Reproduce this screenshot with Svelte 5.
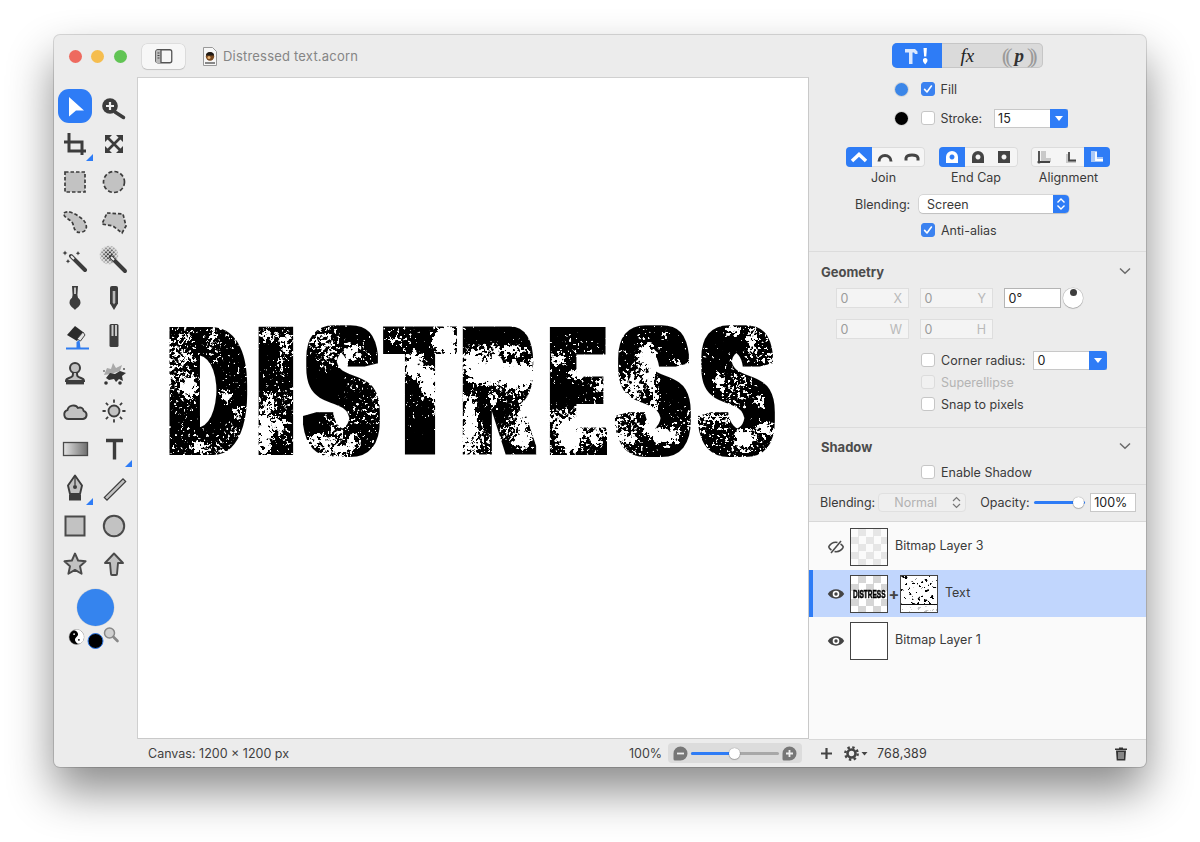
<script>
  const sm = 174; // font size of the big word
  const ink = { D:[.073,.68], I:[.07,.21], S:[.04,.62], T:[.02,.59], R:[.07,.71], E:[.07,.63] };
  const pad = 8;
  const word = [
    ['D',170,247],['I',259,293],['S',304,379],['T',384,456],
    ['R',463,537],['E',550,607],['S',616,690],['S',699,774]
  ].map(([ch,a,b]) => {
    const [l,r] = ink[ch];
    const sx = ((b-a)-2*pad)/((r-l)*sm);
    const x = a+pad - l*sm*sx;
    return { ch, t:`translate(${x.toFixed(1)} 451) scale(${sx.toFixed(3)} 1)` };
  });
  const blobs = [
    [189,386,7,12],[187,358,8,3],[226,396,5,7],[238,412,4,5],[200,447,11,4],[213,339,3,8],[186,336,4,2],
    [268,336,8,4],[286,345,4,12],[281,365,2,9],[265,432,7,24],[279,426,7,8],[287,441,3,3],[270,402,3,10],
    [351,352,8,8],[318,441,12,5],[340,449,11,4],[352,442,5,7],
    [414,365,9,13],[428,380,9,15],[445,340,13,15],[395,339,6,3],[404,372,2,10],[437,404,2,16],[430,394,7,5],
    [473,362,9,10],[487,373,21,12],[515,376,20,14],[470,420,7,28],[507,350,18,4],[523,422,5,18],[522,440,11,8],[493,400,4,8],
    [559,360,8,5],[575,375,6,5],[570,436,13,17],[595,438,6,8],[600,385,4,8],
    [647,355,9,12],[651,378,6,12],[655,400,3,14],[665,436,15,8],[650,428,8,7],[620,436,5,5],[676,362,4,3],[630,440,6,5],[665,334,2,5],
    [733,330,8,4],[752,340,4,14],[720,382,5,8],[744,439,10,11],[765,429,8,7],[716,418,15,2],[760,402,4,7]
  ];
  const layers = [
    { name:'Bitmap Layer 3', kind:'ghost', hidden:true },
    { name:'Text', kind:'text', selected:true },
    { name:'Bitmap Layer 1', kind:'blank' }
  ];
</script>

{#snippet check(on, off)}
  <span class="box" class:on class:off>
    {#if on}<svg width="14" height="14" viewBox="0 0 14 14"><path d="M3.6 7.4 6 10l4.4-6" fill="none" stroke="#fff" stroke-width="1.6" stroke-linecap="round" stroke-linejoin="round"/></svg>{/if}
  </span>
{/snippet}

{#snippet arrowDown()}
  <span class="drop"><svg width="10" height="7" viewBox="0 0 10 7"><path d="M1 1h8L5 6z" fill="#fff"/></svg></span>
{/snippet}

{#snippet chevron()}
  <svg class="chev" width="12" height="8" viewBox="0 0 12 8"><path d="M1 1.5 6 6.2l5-4.7" fill="none" stroke="#6a6a6a" stroke-width="1.5"/></svg>
{/snippet}

<div class="page">
  <div class="window">
    <div class="left">
      <header class="titlebar">
        <span class="light red"></span><span class="light yellow"></span><span class="light green"></span>
        <button class="sidebtn" aria-label="Toggle sidebar">
          <svg width="18" height="15" viewBox="0 0 18 15"><rect x=".75" y=".75" width="16" height="13" rx="2" fill="none" stroke="#555" stroke-width="1.3"/><path d="M1 2.5a1.5 1.5 0 0 1 1.5-1.5H6v13H2.500A1.500 1.500 0 0 1 1 12.500z" fill="#bbb"/><path d="M6 1v13" stroke="#555" stroke-width="1.300"/><path d="M2.500 4h2M2.500 6.500h2M2.500 9h2" stroke="#444" stroke-width="1"/></svg>
        </button>
        <svg class="doc" width="14" height="19" viewBox="0 0 14 19"><path d="M.5.5h9l4 4v14H.5z" fill="#f7f7f7" stroke="#999"/><circle cx="7" cy="9.500" r="4.200" fill="#7a4a20"/><path d="M3 8.500a4 3.500 0 0 1 8 0z" fill="#1f1a16"/><circle cx="6" cy="10.500" r="1.500" fill="#e5b070"/><rect x="2" y="15" width="10" height="2" fill="#888"/></svg>
        <span class="title">Distressed text.acorn</span>
      </header>

      <div class="work">
        <aside class="toolbar">
          <div class="tools">
            <div class="tool sel"><svg viewBox="0 0 28 28"><path d="M8 5 23 18.500 15 18.500 8 24.500z" fill="#fff"/></svg></div>
            <div class="tool"><svg viewBox="0 0 28 28"><path d="M15 20l8.500 5.500" stroke="#3c3c3c" stroke-width="3.500" stroke-linecap="round"/><circle cx="10" cy="14" r="7.800" fill="#3c3c3c"/><path d="M10 10v8M6 14h8" stroke="#eee" stroke-width="2.200"/></svg></div>

            <div class="tool corner"><svg viewBox="0 0 28 28"><path d="M8 3v18h17M3 12h18v13" fill="none" stroke="#3c3c3c" stroke-width="3"/></svg></div>
            <div class="tool"><svg viewBox="0 0 28 28"><path d="M8 8l12 12M20 8 8 20" stroke="#3c3c3c" stroke-width="2.600"/><path d="M5 5h7l-7 7zM23 5h-7l7 7zM5 23h7l-7-7zM23 23h-7l7-7z" fill="#3c3c3c"/></svg></div>

            <div class="tool"><svg viewBox="0 0 28 28"><rect x="4" y="4" width="20" height="20" fill="#c2c2c2" stroke="#3c3c3c" stroke-width="1.700" stroke-dasharray="3.500 2"/></svg></div>
            <div class="tool"><svg viewBox="0 0 28 28"><circle cx="14" cy="14" r="10.500" fill="#c2c2c2" stroke="#3c3c3c" stroke-width="1.700" stroke-dasharray="4 2.200"/></svg></div>

            <div class="tool"><svg viewBox="0 0 28 28"><path d="M3 6C6 3 14 6 20 11c7 5 7 13 1 14-6 2-8-3-9-8C10 12 2 11 3 6z" fill="#c2c2c2" stroke="#3c3c3c" stroke-width="1.700" stroke-dasharray="3.500 2"/></svg></div>
            <div class="tool"><svg viewBox="0 0 28 28"><path d="M7 6l16 1 3 12-4 7-9-7-11-2z" fill="#c2c2c2" stroke="#3c3c3c" stroke-width="1.700" stroke-dasharray="3.500 2"/></svg></div>

            <div class="tool"><svg viewBox="0 0 28 28"><path d="M10 11 24 25" stroke="#3c3c3c" stroke-width="4" stroke-linecap="round"/><path d="M10 11l3 3" stroke="#eee" stroke-width="2"/><path d="M4 5.500l.8 1.700 1.700.8-1.700.8L4 10.500l-.8-1.700L1.500 8l1.700-.8zM17 6l.7 1.500 1.500.7-1.500.7-.7 1.500-.7-1.500-1.500-.7 1.500-.7zM7 14l.7 1.500 1.500.7-1.500.7-.7 1.500-.7-1.500-1.500-.7 1.500-.7z" fill="#3c3c3c"/></svg></div>
            <div class="tool"><svg viewBox="0 0 28 28"><defs><radialGradient id="halo" cx="9" cy="10" r="10" gradientUnits="userSpaceOnUse"><stop offset=".3" stop-color="#3c3c3c"/><stop offset="1" stop-color="#cfcfcf"/></radialGradient><pattern id="dots" width="2.800" height="2.800" patternUnits="userSpaceOnUse" patternTransform="rotate(45)"><rect width="2" height="2" fill="#fff"/></pattern><mask id="halomask" maskUnits="userSpaceOnUse" x="-2" y="-2" width="24" height="24"><rect x="-2" y="-2" width="24" height="24" fill="url(#dots)"/></mask></defs><circle cx="9" cy="10" r="9.500" fill="url(#halo)" mask="url(#halomask)"/><path d="M11 12 25 26" stroke="#3c3c3c" stroke-width="4" stroke-linecap="round"/><path d="M11 12l3 3" stroke="#eee" stroke-width="2"/></svg></div>

            <div class="tool"><svg viewBox="0 0 28 28"><path d="M11 3h6l-.6 9 .6 3h-6l.6-3z" fill="#3c3c3c"/><path d="M13 4.500h2v6.500h-2z" fill="#c4c4c4"/><path d="M14 27c-2-2.500-5.500-4-5.500-7.500a5.500 5.500 0 0 1 11 0c0 3.500-3.500 5-5.500 7.500z" fill="#3c3c3c"/></svg></div>
            <div class="tool"><svg viewBox="0 0 28 28"><path d="M10 5a2 2 0 0 1 2-2h4a2 2 0 0 1 2 2v15.500l-4 6.500-4-6.500z" fill="#3c3c3c"/><path d="M12.700 8h2.600v11.500l-1.300 2-1.300-2z" fill="#b8b8b8"/></svg></div>

            <div class="tool"><svg viewBox="0 0 28 28"><path d="M6 14l8-9 8 6-6 9z" fill="#2a2a2a"/><path d="M22 11l2 3-4.500 6-3.500-2z" fill="#e2e2e2" stroke="#333" stroke-width=".9"/><path d="M5 27.500h23" stroke="#2f7cf0" stroke-width="2"/><path d="M15.500 27V21l3-2 1 8z" fill="#2f7cf0"/></svg></div>
            <div class="tool"><svg viewBox="0 0 28 28"><rect x="9.500" y="3" width="9" height="23" rx="1.500" fill="#3c3c3c"/><rect x="11.500" y="4" width="2" height="11" fill="#c8c8c8"/><rect x="15" y="4" width="2" height="11" fill="#c8c8c8"/></svg></div>

            <div class="tool"><svg viewBox="0 0 28 28"><circle cx="14" cy="9" r="5" fill="#c2c2c2" stroke="#3c3c3c" stroke-width="2"/><path d="M12 14c0 4-1 4-4 5-1.500.5-3 1-3 3h18c0-2-1.500-2.500-3-3-3-1-4-1-4-5" fill="#c2c2c2" stroke="#3c3c3c" stroke-width="2"/><path d="M5 24h18" stroke="#3c3c3c" stroke-width="2.800"/></svg></div>
            <div class="tool"><svg viewBox="0 0 28 28"><path d="M4 16l3-7 4 1 2-6 3 5 6-3-2 6-9 3z" fill="#a9a9a9"/><path d="M6 19l4-5 5 1 5-3 6 2-4 3 1 5-4-2-3 3-2-3-5 1z" fill="#333"/><circle cx="6" cy="24" r="1.800" fill="#333"/><circle cx="20" cy="24" r="1.800" fill="#333"/><circle cx="24" cy="10" r="1" fill="#555"/><circle cx="4" cy="12" r="1" fill="#777"/></svg></div>

            <div class="tool"><svg viewBox="0 0 28 28"><path d="M7.500 22a4.500 4.500 0 0 1-1-8.800C7 8.500 14.500 6.500 17 11c3-1.500 5.500.5 5.500 2.800a4.200 4.200 0 0 1-.5 8.200z" fill="#c2c2c2" stroke="#3c3c3c" stroke-width="1.900" stroke-linejoin="round"/></svg></div>
            <div class="tool"><svg viewBox="0 0 28 28"><circle cx="14" cy="14" r="5.500" fill="#c2c2c2" stroke="#3c3c3c" stroke-width="1.800"/><path d="M14 2.500v3.200M14 22.300v3.200M2.500 14h3.200M22.300 14h3.200M5.900 5.900l2.200 2.200M19.900 19.900l2.200 2.200M5.900 22.100l2.200-2.200M19.900 8.100l2.200-2.200" stroke="#3c3c3c" stroke-width="1.800"/></svg></div>

            <div class="tool"><svg viewBox="0 0 28 28"><defs><linearGradient id="gr"><stop offset="0" stop-color="#e4e4e4"/><stop offset="1" stop-color="#6e6e6e"/></linearGradient></defs><rect x="2.500" y="7.500" width="24" height="13" fill="url(#gr)" stroke="#4a4a4a" stroke-width="1.300"/></svg></div>
            <div class="tool corner"><svg viewBox="0 0 28 28"><path d="M6 5.500h17M14.500 5.500V24.500" fill="none" stroke="#3c3c3c" stroke-width="3.400"/></svg></div>

            <div class="tool corner"><svg viewBox="0 0 28 28"><path d="M14 1.500 21 11.500 19 20H9L7 11.500z" fill="#c2c2c2" stroke="#3c3c3c" stroke-width="1.900" stroke-linejoin="round"/><path d="M14 3v8" stroke="#3c3c3c" stroke-width="1.300"/><circle cx="14" cy="13" r="2" fill="#3c3c3c"/><rect x="8" y="20.500" width="12" height="6" fill="#3c3c3c"/></svg></div>
            <div class="tool"><svg viewBox="0 0 28 28"><path d="M7 23.500 23 7.500" stroke="#3c3c3c" stroke-width="5" stroke-linecap="square"/><path d="M7 23.500 23 7.500" stroke="#c2c2c2" stroke-width="2.600" stroke-linecap="square"/></svg></div>

            <div class="tool"><svg viewBox="0 0 28 28"><rect x="4.500" y="4.500" width="19" height="19" fill="#c2c2c2" stroke="#4a4a4a" stroke-width="2"/></svg></div>
            <div class="tool"><svg viewBox="0 0 28 28"><circle cx="14" cy="14" r="10.200" fill="#c2c2c2" stroke="#4a4a4a" stroke-width="2"/></svg></div>

            <div class="tool"><svg viewBox="0 0 28 28"><path d="M14 3.500l3.100 7 7.500.8-5.600 5 1.600 7.400-6.600-3.800-6.600 3.800 1.600-7.400-5.600-5 7.500-.8z" fill="#c2c2c2" stroke="#4a4a4a" stroke-width="1.900" stroke-linejoin="round"/></svg></div>
            <div class="tool"><svg viewBox="0 0 28 28"><path d="M14 3.500 23 13h-5l-1 11a1 1 0 0 1-1 1h-4a1 1 0 0 1-1-1l-1-11H5z" fill="#c2c2c2" stroke="#4a4a4a" stroke-width="1.900" stroke-linejoin="round"/></svg></div>
          </div>

          <div class="fillwell"></div>
          <svg class="wells" width="64" height="24" viewBox="0 0 64 24" role="img" aria-label="Colour wells">
            <circle cx="14.500" cy="8" r="7.500" fill="#000" stroke="#999" stroke-width=".5"/>
            <g transform="rotate(-40 14.500 8)">
              <path d="M14.500.5a7.500 7.500 0 0 1 0 15 3.750 3.750 0 0 1 0-7.500 3.750 3.750 0 0 0 0-7.500z" fill="#fff"/>
              <circle cx="14.500" cy="4.250" r=".9" fill="#fff"/>
              <circle cx="14.500" cy="11.750" r=".9" fill="#000"/>
            </g>
            <circle cx="33.500" cy="12" r="7.500" fill="#000" stroke="#2f7cf0" stroke-width="1"/>
            <circle cx="47.500" cy="4" r="5" fill="#d0d0d0" stroke="#888" stroke-width="1.500"/>
            <path d="M51.500 8l4 4" stroke="#888" stroke-width="2.600" stroke-linecap="round"/>
          </svg>
        </aside>

        <main class="canvas">
          <svg class="art" width="670" height="662" viewBox="138 77 670 662" role="img" aria-label="Distressed word">
            <defs>
              <filter id="distress" filterUnits="userSpaceOnUse" x="160" y="315" width="630" height="155" color-interpolation-filters="sRGB">
                <feMorphology in="SourceGraphic" operator="dilate" radius="8 4" result="fat"/>
                <feTurbulence type="fractalNoise" baseFrequency="0.02" numOctaves="2" seed="11" result="lo"/>
                <feTurbulence type="fractalNoise" baseFrequency="0.32" numOctaves="3" seed="4" result="hi"/>
                <feComposite in="lo" in2="hi" operator="arithmetic" k1="0" k2="0.45" k3="0.55" k4="0" result="mix"/>
                <feColorMatrix in="mix" type="matrix" values="0 0 0 0 0  0 0 0 0 0  0 0 0 0 0  24 0 0 0 -14.100" result="holes"/>
                <feComposite in="fat" in2="holes" operator="out"/>
              </filter>
              <filter id="rough" filterUnits="userSpaceOnUse" x="160" y="315" width="630" height="155">
                <feTurbulence type="fractalNoise" baseFrequency="0.24" numOctaves="3" seed="9" result="n"/>
                <feDisplacementMap in="SourceGraphic" in2="n" scale="20" xChannelSelector="R" yChannelSelector="G"/>
              </filter>
            </defs>
            <g filter="url(#distress)" class="word">
              {#each word as l}
                <text transform={l.t}>{l.ch}</text>
              {/each}
            </g>
            <g filter="url(#rough)" fill="#fff">
              {#each blobs as [cx,cy,rx,ry]}
                <ellipse {cx} {cy} {rx} {ry}/>
              {/each}
            </g>
          </svg>
        </main>
      </div>

      <footer class="status">
        <span class="canvas-size">Canvas: 1200 × 1200 px</span>
        <span class="pct">100%</span>
        <div class="zoompill">
          <svg width="15" height="15" viewBox="0 0 15 15"><path d="M7.500.5a7 7 0 0 1 0 14H2a1.500 1.500 0 0 1-1.500-1.500V7.500a7 7 0 0 1 7-7z" fill="#777"/><path d="M4 7.500h7" stroke="#eee" stroke-width="1.800"/></svg>
          <div class="ztrack"><div class="zfill"></div><div class="zknob"></div></div>
          <svg width="15" height="15" viewBox="0 0 15 15"><path d="M7.500.5a7 7 0 0 1 0 14H2a1.500 1.500 0 0 1-1.500-1.500V7.500a7 7 0 0 1 7-7z" fill="#777"/><path d="M4 7.500h7M7.500 4v7" stroke="#eee" stroke-width="1.800"/></svg>
        </div>
      </footer>
    </div>

    <section class="inspector">
      <div class="sec top">
        <div class="tabs">
          <div class="tab active"><svg width="30" height="20" viewBox="0 0 30 20"><path d="M3 3h10l2.500 2.500V8H13l-1-1.500H10.500V18h-3.500V6.500H3z" fill="#dbe8fd"/><path d="M21.500 2h3.400l-.6 8.500h-2.200z" fill="#fff"/><path d="M23.200 12c1.700 0 2.300 1.300 2.300 2.300 0 1.800-1.300 2.700-2.300 4.200-1-1.500-2.300-2.400-2.300-4.200 0-1 .6-2.300 2.300-2.300z" fill="#fff"/></svg></div>
          <div class="tab fx">fx</div>
          <div class="tab p"><span class="par">((</span><span class="pi">p</span><span class="par close">))</span></div>
        </div>
        <div class="row paint">
          <span class="dot blue"></span>
          {@render check(true)}
          <span class="lbl">Fill</span>
        </div>
        <div class="row paint">
          <span class="dot black"></span>
          {@render check(false)}
          <span class="lbl">Stroke:</span>
          <div class="combo stroke"><span class="val">15</span>{@render arrowDown()}</div>
        </div>

        <div class="segs">
          <div class="segcol">
            <div class="seg">
              <span class="cell on"><svg width="20" height="14" viewBox="0 0 20 14"><path d="M3 11 10 4.500 17 11" fill="none" stroke="#fff" stroke-width="3.500"/></svg></span>
              <span class="cell"><svg width="20" height="14" viewBox="0 0 20 14"><path d="M4 11.500c0-8 12-8 12 0" fill="none" stroke="#444" stroke-width="3"/></svg></span>
              <span class="cell"><svg width="20" height="14" viewBox="0 0 20 14"><path d="M4 10.500V8c1-4 11-4 12 0v2.500" fill="none" stroke="#444" stroke-width="3"/></svg></span>
            </div>
            <span class="cap">Join</span>
          </div>
          <div class="segcol">
            <div class="seg">
              <span class="cell on"><svg width="16" height="14" viewBox="0 0 16 14"><path d="M2 13V7a6 6 0 0 1 12 0v6zM8 4.500a2.500 2.500 0 1 0 .001 0z" fill="#fff" fill-rule="evenodd"/></svg></span>
              <span class="cell"><svg width="16" height="14" viewBox="0 0 16 14"><path d="M2 13V7a6 6 0 0 1 12 0v6zM8 4.500a2.500 2.500 0 1 0 .001 0z" fill="#444" fill-rule="evenodd"/></svg></span>
              <span class="cell"><svg width="16" height="14" viewBox="0 0 16 14"><path d="M2 1h12v12H2zM8 4.500a2.500 2.500 0 1 0 .001 0z" fill="#444" fill-rule="evenodd"/></svg></span>
            </div>
            <span class="cap">End Cap</span>
          </div>
          <div class="segcol">
            <div class="seg">
              <span class="cell"><svg width="16" height="14" viewBox="0 0 16 14"><path d="M5 1h5v7h5v4H5z" fill="#c9c9c9"/><path d="M3 1v11h11" fill="none" stroke="#444" stroke-width="1.800"/><circle cx="3" cy="12" r="1.600" fill="#444"/></svg></span>
              <span class="cell"><svg width="16" height="14" viewBox="0 0 16 14"><path d="M4 4h3v6h7v3H4z" fill="#c9c9c9"/><path d="M7 2v8.500h7" fill="none" stroke="#444" stroke-width="1.800"/></svg></span>
              <span class="cell on"><svg width="16" height="14" viewBox="0 0 16 14"><path d="M2 1h6v6h6v5H2z" fill="#a9c8f7"/><path d="M7 2v8h7" fill="none" stroke="#fff" stroke-width="1.800"/></svg></span>
            </div>
            <span class="cap">Alignment</span>
          </div>
        </div>

        <div class="row blend">
          <span class="lbl">Blending:</span>
          <div class="select"><span>Screen</span><span class="stepper"><svg width="10" height="14" viewBox="0 0 10 14"><path d="M1.500 5.500 5 2l3.500 3.500M1.500 8.500 5 12l3.500-3.500" fill="none" stroke="#fff" stroke-width="1.400"/></svg></span></div>
        </div>
        <div class="row opt">{@render check(true)}<span class="lbl">Anti-alias</span></div>
      </div>

      <div class="sec geom">
        <div class="head"><span>Geometry</span>{@render chevron()}</div>
        <div class="fields">
          <div class="field"><span>0</span><em>X</em></div>
          <div class="field"><span>0</span><em>Y</em></div>
          <div class="field live"><span>0°</span></div>
          <span class="dial"><i></i></span>
        </div>
        <div class="fields second">
          <div class="field"><span>0</span><em>W</em></div>
          <div class="field"><span>0</span><em>H</em></div>
        </div>
        <div class="row opt corner-row">
          {@render check(false)}<span class="lbl">Corner radius:</span>
          <div class="combo radius"><span class="val">0</span>{@render arrowDown()}</div>
        </div>
        <div class="row opt">{@render check(false, true)}<span class="lbl faded">Superellipse</span></div>
        <div class="row opt">{@render check(false)}<span class="lbl">Snap to pixels</span></div>
      </div>

      <div class="sec shadow">
        <div class="head"><span>Shadow</span>{@render chevron()}</div>
        <div class="row opt enable">{@render check(false)}<span class="lbl">Enable Shadow</span></div>
      </div>

      <div class="sec opacity">
        <span class="lbl">Blending:</span>
        <div class="normal"><span>Normal</span><svg width="9" height="13" viewBox="0 0 9 13"><path d="M1 5 4.500 1.500 8 5M1 8l3.500 3.500L8 8" fill="none" stroke="#777" stroke-width="1.200"/></svg></div>
        <span class="lbl oplabel">Opacity:</span>
        <div class="otrack"><div class="oknob"></div></div>
        <div class="opct">100%</div>
      </div>

      <div class="layers">
        {#each layers as layer}
          <div class="layer" class:selected={layer.selected}>
            <svg class="eye" width="18" height="14" viewBox="0 0 18 14">
              {#if layer.hidden}
                <path d="M1.500 7C4 3 8 2 10.500 2.500M16.500 7C14 11 10 12 7.500 11.500M1.500 7c1 1.500 2 2.500 3 3M16.500 7c-1-1.500-2-2.500-3-3" fill="none" stroke="#4a4a4a" stroke-width="1.500"/>
                <path d="M4 13 14 1" stroke="#4a4a4a" stroke-width="1.500"/>
              {:else}
                <path d="M.8 7C4.500 .8 13.500 .8 17.200 7 13.500 13.200 4.500 13.200 .8 7z" fill="#444"/>
                <circle cx="9" cy="7" r="3.300" fill="#fff"/>
                <circle cx="9" cy="7" r="1.700" fill="#444"/>
              {/if}
            </svg>
            {#if layer.kind === 'ghost'}
              <div class="thumb checker faint"></div>
            {:else if layer.kind === 'text'}
              <div class="thumb checker"><b>DISTRESS</b></div>
              <span class="plus">+</span>
              <div class="thumb mask">
                <svg width="36" height="36" viewBox="0 0 36 36"><defs><filter id="speck" x="0" y="0" width="100%" height="100%"><feTurbulence type="fractalNoise" baseFrequency="0.3" numOctaves="3" seed="8"/><feColorMatrix type="matrix" values="0 0 0 0 0 0 0 0 0 0 0 0 0 0 0 20 0 0 0 -12.600"/></filter></defs><rect width="36" height="36" fill="#000" filter="url(#speck)"/><path d="M0 28.500h36" stroke="#111" stroke-width="1"/><rect y="29" width="36" height="7" fill="#fff" opacity=".75"/></svg>
              </div>
            {:else}
              <div class="thumb"></div>
            {/if}
            <span class="lname">{layer.name}</span>
          </div>
        {/each}
      </div>

      <footer class="bottom">
        <svg class="add" width="13" height="13" viewBox="0 0 13 13"><path d="M6.500 1v11M1 6.500h11" stroke="#444" stroke-width="2.200"/></svg>
        <svg class="gear" width="25" height="15" viewBox="0 0 25 15"><circle cx="7.500" cy="7.500" r="6.200" fill="none" stroke="#444" stroke-width="2.400" stroke-dasharray="2.400 2.470"/><circle cx="7.500" cy="7.500" r="4" fill="none" stroke="#444" stroke-width="2.600"/><path d="M17.500 6h6l-3 3.500z" fill="#444"/></svg>
        <span class="coords">768,389</span>
        <svg class="trash" width="12" height="14" viewBox="0 0 12 14"><path d="M4 1.500V.6h4v.9h4v1.400H0V1.500zM1 3.500h10l-.7 10H1.700z" fill="#333"/><path d="M4 5v7M6 5v7M8 5v7" stroke="#ececec" stroke-width=".9"/></svg>
      </footer>
    </section>
  </div>
</div>

<style>
  :global(body) { margin: 0; background: #fff; }
  .page {
    width: 1200px; height: 842px; overflow: hidden; box-sizing: border-box;
    padding: 35px 54px 0;
    font-family: Inter, "Liberation Sans", sans-serif;
    font-size: 12.5px; color: #3a3a3a;
  }
  .window {
    width: 1092px; height: 732px; display: flex; background: #ececec;
    border-radius: 6px; overflow: hidden;
    box-shadow: 0 0 0 1px rgba(0,0,0,.14), 0 24px 46px rgba(0,0,0,.46);
  }
  .left { width: 755px; display: flex; flex-direction: column; flex: none; }
  .titlebar { height: 42px; display: flex; align-items: center; padding-left: 14.500px; box-sizing: border-box; flex: none; }
  .light { width: 13px; height: 13px; border-radius: 50%; margin-right: 9.500px; }
  .red { background: #ee6a5f; } .yellow { background: #f5bd4f; } .green { background: #61c454; }
  .sidebtn {
    width: 43px; height: 25px; margin-left: 6px; padding: 0; border: 0; border-radius: 5px;
    background: #f7f7f7; box-shadow: 0 0 0 .5px rgba(0,0,0,.12), 0 1px 1px rgba(0,0,0,.12);
    display: flex; align-items: center; justify-content: center;
  }
  .doc { margin-left: 18px; }
  .title { margin-left: 6px; color: #858585; font-size: 13px; letter-spacing: .2px; }

  .work { flex: 1; display: flex; min-height: 0; }
  .toolbar { width: 84px; flex: none; box-sizing: border-box; padding: 10px 0 0 1.500px; border-right: 1px solid #cfcfcf; }
  .tools { display: grid; grid-template-columns: 39px 39px; grid-auto-rows: 38.170px; }
  .tool { position: relative; display: flex; align-items: center; justify-content: center; }
  .tool svg { width: 28px; height: 28px; display: block; overflow: visible; }
  .tool.sel::before {
    content: ""; position: absolute; left: 2.500px; top: 2px; width: 34px; height: 34px;
    border-radius: 11px; background: #2e7cf6;
  }
  .tool.sel svg { position: relative; }
  .tool.corner::after {
    content: ""; position: absolute; right: 2px; bottom: 2px;
    border-style: solid; border-width: 0 0 7px 7px;
    border-color: transparent transparent #2e7cf6 transparent;
  }
  .fillwell { width: 37px; height: 37px; border-radius: 50%; background: #3584ee; margin: 6px 0 0 21px; box-shadow: 0 0 0 .5px rgba(0,0,0,.1); }
  .wells { display: block; margin: 3px 0 0 6.500px; overflow: visible; }

  .canvas { flex: 1; background: #fff; border-right: 1px solid #c9c9c9; border-bottom: 1px solid #c9c9c9; border-top: 1px solid #d0d0d0; box-sizing: border-box; overflow: hidden; }
  .art { display: block; margin-top: -1px; }
  .word { font: 700 174px "Liberation Sans", sans-serif; fill: #000; }

  .status { height: 28px; flex: none; display: flex; align-items: center; padding-left: 94px; box-sizing: border-box; font-size: 12.500px; color: #3f3f3f; }
  .canvas-size { width: 481px; }
  .pct { width: 39px; }
  .zoompill { width: 134px; height: 20px; background: #dcdcdc; border-radius: 4px; display: flex; align-items: center; justify-content: space-between; padding: 0 5px; box-sizing: border-box; gap: 3px; }
  .ztrack { position: relative; flex: 1; height: 3px; border-radius: 2px; background: #a8a8a8; }
  .zfill { position: absolute; left: 0; top: 0; bottom: 0; width: 49%; background: #2e7cf6; border-radius: 2px; }
  .zknob, .oknob { position: absolute; width: 11px; height: 11px; border-radius: 50%; background: #fff; top: -4px; box-shadow: 0 0 1px rgba(0,0,0,.5), 0 1px 1px rgba(0,0,0,.2); }
  .zknob { left: calc(49% - 5.500px); }

  .inspector { width: 337px; flex: none; display: flex; flex-direction: column; }
  .sec { border-bottom: 1px solid #dcdcdc; box-sizing: border-box; flex: none; }
  .top { height: 217px; padding-top: 8px; }
  .tabs { width: 151px; height: 25px; margin-left: 83px; display: flex; border-radius: 5px; overflow: hidden; background: #dadada; box-shadow: inset 0 0 0 1px #c6c6c6; box-sizing: border-box; }
  .tab { width: 50.300px; display: flex; align-items: center; justify-content: center; font-family: "Liberation Serif", serif; }
  .tab.active { background: #2e7cf6; }
  .fx { font-style: italic; font-weight: 400; font-size: 19px; color: #222; }
  .p { font-size: 19px; }
  .par { color: #9a9a9a; font-size: 22px; letter-spacing: -4px; margin-right: 6px; }
  .par.close { margin-right: 0; margin-left: 1px; letter-spacing: -4px; }
  .pi { font-style: italic; font-weight: 700; color: #333; margin-right: 2px; }

  .row { display: flex; align-items: center; }
  .paint { height: 29px; }
  .tabs + .paint { margin-top: 6.500px; }
  .dot { width: 13px; height: 13px; border-radius: 50%; margin: 0 13px 0 85.500px; box-shadow: 0 0 0 1px #d8d8d8; }
  .dot.blue { background: #3b86e8; } .dot.black { background: #000; }
  .box { width: 14px; height: 14px; box-sizing: border-box; border-radius: 3px; background: #fff; border: 1px solid #c6c6c6; flex: none; display: block; }
  .box.on { background: #3b82f0; border-color: #3b82f0; }
  .box.off { background: #f1f1f1; border-color: #dcdcdc; }
  .box svg { display: block; margin: -1px; }
  .lbl { margin-left: 6px; white-space: nowrap; }
  .faded { color: #b4b4b4; }
  .combo { display: flex; height: 19px; box-sizing: border-box; background: #fff; box-shadow: inset 0 0 0 1px #c8c8c8; margin-left: 12px; }
  .combo.stroke { width: 74px; }
  .combo.radius { width: 74px; margin-left: 8px; }
  .val { flex: 1; padding-left: 4px; line-height: 19px; color: #222; }
  .drop { width: 18px; background: #2e7cf6; border-radius: 0 3px 3px 0; display: flex; align-items: center; justify-content: center; }

  .segs { display: flex; margin: 14.500px 0 0 37px; gap: 13.500px; }
  .segcol { display: flex; flex-direction: column; align-items: center; width: 79px; }
  .seg { display: flex; height: 20px; width: 79px; border-radius: 4px; overflow: hidden; background: #f5f5f5; box-shadow: inset 0 0 0 1px #dcdcdc; }
  .cell { flex: 1; display: flex; align-items: center; justify-content: center; }
  .cell.on { background: #2e7cf6; }
  .cap { margin-top: 3px; line-height: 15px; padding-right: 4px; }

  .blend { height: 18px; margin-top: 10px; }
  .blend .lbl { margin-left: 46px; width: 55px; }
  .select { margin-left: 9px; width: 150px; height: 18px; background: #fff; border-radius: 4px; box-shadow: 0 0 0 .5px rgba(0,0,0,.18), 0 1px 1px rgba(0,0,0,.1); display: flex; justify-content: space-between; align-items: center; padding-left: 8px; box-sizing: border-box; overflow: hidden; }
  .stepper { width: 16px; height: 18px; background: #2e7cf6; display: flex; align-items: center; justify-content: center; }
  .opt { height: 22px; padding-left: 112px; }
  .top .opt { margin-top: 6px; }

  .geom { height: 176px; padding-top: 4px; }
  .head { height: 32px; display: flex; align-items: center; justify-content: space-between; padding: 0 15.500px 0 12px; font-weight: 700; font-size: 13px; color: #4c4c4c; }
  .chev { margin-top: -2px; }
  .fields { display: flex; align-items: center; padding-left: 27px; gap: 11px; height: 20px; }
  .second { margin-top: 11px; }
  .field { width: 73px; height: 20px; box-sizing: border-box; background: #f4f4f4; border: 1px solid #dedede; display: flex; justify-content: space-between; align-items: center; padding: 0 6px 0 3.500px; color: #9b9b9b; }
  .field em { font-style: normal; color: #b9b9b9; }
  .field.live { width: 57px; background: #fff; border-color: #b4b4b4; color: #222; }
  .dial { width: 20px; height: 20px; border-radius: 50%; background: #fff; margin-left: -9px; position: relative; box-shadow: 0 0 0 .5px rgba(0,0,0,.2), 0 1px 1px rgba(0,0,0,.15); }
  .dial i { position: absolute; left: 6.500px; top: 1px; width: 7px; height: 7px; border-radius: 50%; background: #3d3d3d; }
  .corner-row { margin-top: 10px; }

  .shadow { height: 57px; padding-top: 3px; }
  .enable { margin-top: -2px; }

  .opacity { height: 37px; display: flex; align-items: center; padding: 0 0 1px 11px; border-bottom-color: #d8d8d8; }
  .opacity .lbl { margin-left: 0; }
  .normal { width: 88px; height: 19px; margin-left: 3px; box-sizing: border-box; background: #efefef; border-radius: 4px; border: 1px solid #e0e0e0; color: #b2b2b2; display: flex; align-items: center; justify-content: space-between; padding: 0 4px 0 15px; }
  .oplabel { margin-left: 14px !important; }
  .otrack { position: relative; width: 51px; height: 3px; margin-left: 4px; background: #2e7cf6; border-radius: 2px; }
  .oknob { right: 1px; }
  .opct { width: 46px; height: 19px; margin-left: 5px; box-sizing: border-box; background: #fff; border: 1px solid #c8c8c8; color: #222; line-height: 17px; padding-left: 3.500px; }

  .layers { flex: 1; background: #fafafa; padding-top: 1px; border-bottom: 1px solid #d8d8d8; }
  .layer { height: 47px; display: flex; align-items: center; padding-left: 18px; box-sizing: border-box; }
  .layer.selected { background: #c1d6fd; box-shadow: inset 4px 0 0 #2e7cf6; }
  .eye { flex: none; margin-right: 5px; }
  .thumb { width: 38px; height: 38px; flex: none; box-sizing: border-box; border: 1px solid #444; background: #fff; overflow: hidden; position: relative; }
  .checker {
    background: repeating-conic-gradient(#d6d6d6 0 25%, #fff 0 50%) 0 0 / 15px 15px;
    display: flex; align-items: center; justify-content: center;
  }
  .checker.faint { background: repeating-conic-gradient(#e6e6e6 0 25%, #fbfbfb 0 50%) 0 0 / 15px 15px; }
  .checker b { font: 700 10.500px "Liberation Sans", sans-serif; color: #000; transform: scaleX(.62); white-space: nowrap; -webkit-text-stroke: .5px #000; }
  .plus { width: 12px; text-align: center; font-weight: 700; font-size: 16px; line-height: 16px; color: #444; }
  .mask svg { display: block; }
  .lname { margin: -2px 0 0 7px; }

  .bottom { height: 27px; flex: none; display: flex; align-items: center; padding-left: 11px; position: relative; }
  .gear { margin-left: 11px; }
  .coords { margin-left: 8px; letter-spacing: .2px; }
  .trash { margin-left: auto; margin-right: 19px; }
</style>
